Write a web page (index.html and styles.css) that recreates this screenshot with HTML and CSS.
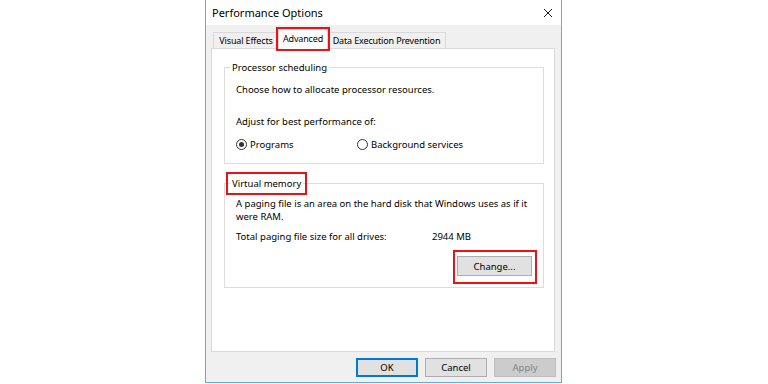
FILE: index.html
```html
<!DOCTYPE html>
<html lang="en">

<head>
    <meta charset="UTF-8">
    <title>Performance Options</title>
    <link rel="stylesheet" href="styles.css">
</head>

<body>
    <div class="window">
        <div class="titlebar">
            <span class="title">Performance Options</span>
            <svg class="close" width="10" height="10" viewBox="0 0 10 10">
                <path d="M1 1 L9 9 M9 1 L1 9" stroke="#1a1a1a" stroke-width="1" fill="none" />
            </svg>
        </div>
        <div class="dialog-body">
            <div class="tabs">
                <div class="tab tab-effects">Visual Effects</div>
                <div class="tab tab-advanced active">Advanced</div>
                <div class="tab tab-dep">Data Execution Prevention</div>
            </div>
            <div class="panel">
                <fieldset class="group group-cpu">
                    <legend>Processor scheduling</legend>
                    <p class="choose">Choose how to allocate processor resources.</p>
                    <p class="adjust">Adjust for best performance of:</p>
                    <div class="radios">
                        <label class="radio"><span class="dot checked"></span>Programs</label>
                        <label class="radio"><span class="dot"></span>Background services</label>
                    </div>
                </fieldset>
                <fieldset class="group group-vm">
                    <legend class="marked">Virtual memory</legend>
                    <p class="paging">A paging file is an area on the hard disk that Windows uses as if it<br>were RAM.</p>
                    <div class="total">
                        <span>Total paging file size for all drives:</span>
                        <span>2944 MB</span>
                    </div>
                    <div class="change-row">
                        <div class="change-mark">
                            <button type="button" class="btn btn-change">Change...</button>
                        </div>
                    </div>
                </fieldset>
            </div>
            <div class="footer">
                <button type="button" class="btn btn-default">OK</button>
                <button type="button" class="btn">Cancel</button>
                <button type="button" class="btn" disabled>Apply</button>
            </div>
        </div>
    </div>
</body>

</html>
```

FILE: styles.css
```css
body {
    margin: 0;
    background-color: #fff;
    font-family: "Noto Sans", "Liberation Sans", sans-serif;
    font-size: 9.5px;
    color: #000;
}

.window {
    width: 357px;
    height: 383px;
    margin-left: 205px;
    box-sizing: border-box;
    border: 1px solid #6ea5dd;
    border-top: none;
    background-color: #f0f0f0;
    display: flex;
    flex-direction: column;
}

.titlebar {
    height: 25px;
    flex-shrink: 0;
    background-color: #fff;
    display: flex;
    align-items: center;
    justify-content: space-between;
    padding: 0 8px 0 6px;
}

.title {
    font-size: 11px;
}

.dialog-body {
    flex: 1;
    display: flex;
    flex-direction: column;
    padding: 4px 6px 0 5px;
}

.tabs {
    height: 19px;
    display: flex;
    align-items: flex-end;
    margin-left: 2px;
}

.tab {
    height: 16px;
    box-sizing: border-box;
    border: 1px solid #d9d9d9;
    border-bottom: none;
    background-color: #f0f0f0;
    text-align: center;
    line-height: 15px;
    font-size: 9px;
    letter-spacing: -0.15px;
    white-space: nowrap;
}

.tab-effects {
    width: 65px;
    border-right: none;
}

.tab-advanced {
    width: 50px;
}

.tab-dep {
    width: 118px;
    border-left: none;
}

.tab.active {
    height: 20px;
    margin-bottom: -1px;
    background-color: #fff;
    position: relative;
    z-index: 1;
    line-height: 17px;
    outline: 2px solid #ee1111;
}

.panel {
    height: 304px;
    box-sizing: border-box;
    background-color: #fff;
    border: 1px solid #d9d9d9;
    padding: 11px 10px 0 12px;
}

.group {
    margin: 0;
    border: 1px solid #dcdcdc;
    padding: 0 11px;
}

.group legend {
    margin-left: -6px;
    padding: 0 2px;
    line-height: 15px;
}

.group p {
    margin: 0;
    line-height: 15px;
}

.group-cpu {
    padding-bottom: 11px;
}

.choose {
    margin-top: 7px !important;
}

.adjust {
    margin-top: 17px !important;
}

.radios {
    display: grid;
    grid-template-columns: 121px auto;
    margin-top: 8px;
    line-height: 15px;
}

.radio {
    display: flex;
    align-items: center;
    gap: 3px;
}

.dot {
    width: 11px;
    height: 11px;
    box-sizing: border-box;
    border: 1px solid #333;
    border-radius: 50%;
    display: flex;
    align-items: center;
    justify-content: center;
}

.dot.checked::after {
    content: '';
    width: 5px;
    height: 5px;
    border-radius: 50%;
    background-color: #333;
}

.group-vm {
    margin-top: 12px;
    padding-bottom: 3px;
}

.group legend.marked {
    outline: 2px solid #ee1111;
    outline-offset: 2px;
}

.paging {
    margin-top: 6px !important;
    line-height: 13px !important;
}

.total {
    display: grid;
    grid-template-columns: 196px auto;
    margin-top: 6px;
    line-height: 15px;
}

.change-row {
    display: flex;
    justify-content: flex-end;
    margin-top: 6px;
    margin-right: -5px;
}

.change-mark {
    border: 2px solid #ee1111;
    padding: 4px 3px 6px 2px;
}

.btn {
    height: 19px;
    width: 62px;
    box-sizing: border-box;
    border: 1px solid #adadad;
    background-color: #e1e1e1;
    font-family: inherit;
    font-size: 9.5px;
    color: #000;
    padding: 0;
}

.btn-change {
    width: 75px;
    height: 20px;
}

.btn-default {
    border: 2px solid #0078d7;
}

.btn:disabled {
    background-color: #cccccc;
    border-color: #bfbfbf;
    color: #838383;
}

.footer {
    display: flex;
    justify-content: flex-end;
    gap: 7px;
    padding-top: 6px;
    margin-right: -1px;
}
```
